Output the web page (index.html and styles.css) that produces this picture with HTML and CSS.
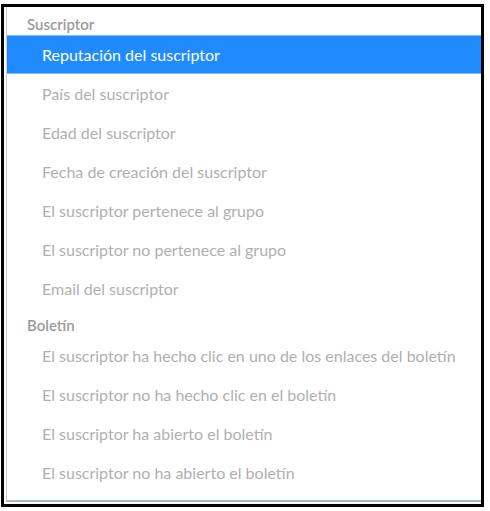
FILE: index.html
```html
<!DOCTYPE html>
<html lang="es">
<head>
<meta charset="utf-8">
<link rel="stylesheet" href="styles.css">
</head>
<body>
<div class="frame">
  <div class="list">
    <div class="group">Suscriptor</div>
    <div class="item active">Reputación del suscriptor</div>
    <div class="item">País del suscriptor</div>
    <div class="item">Edad del suscriptor</div>
    <div class="item">Fecha de creación del suscriptor</div>
    <div class="item">El suscriptor pertenece al grupo</div>
    <div class="item">El suscriptor no pertenece al grupo</div>
    <div class="item">Email del suscriptor</div>
    <div class="group">Boletín</div>
    <div class="item">El suscriptor ha hecho clic en uno de los enlaces del boletín</div>
    <div class="item">El suscriptor no ha hecho clic en el boletín</div>
    <div class="item">El suscriptor ha abierto el boletín</div>
    <div class="item">El suscriptor no ha abierto el boletín</div>
  </div>
</div>
</body>
</html>
```
FILE: styles.css
```css
html, body {
  margin: 0;
  padding: 0;
  background: #fff;
}
body {
  font-family: Lato, "Noto Sans", sans-serif;
}
.frame {
  box-sizing: border-box;
  margin: 4px 0 0 1px;
  width: 483px;
  height: 503px;
  border: 3px solid #000;
  padding: 0 0 2px 2px;
}
.list {
  box-sizing: border-box;
  height: 100%;
  border-left: 1px solid #c9c9c9;
  border-bottom: 2px solid #a7b8cc;
}
.group {
  height: 28px;
  box-sizing: border-box;
  padding: 7px 0 0 20px;
  line-height: 20px;
  font-size: 15px;
  font-weight: 600;
  color: #9b9b9b;
}
.item {
  height: 39px;
  line-height: 40px;
  padding-left: 35px;
  font-size: 16px;
  color: #b0b0b0;
  white-space: nowrap;
}
.item.active {
  background: #1f8bff;
  color: #fff;
  box-shadow: inset 0 1px 0 #7fbfff, inset 0 -1px 0 #7fbfff;
}
```
